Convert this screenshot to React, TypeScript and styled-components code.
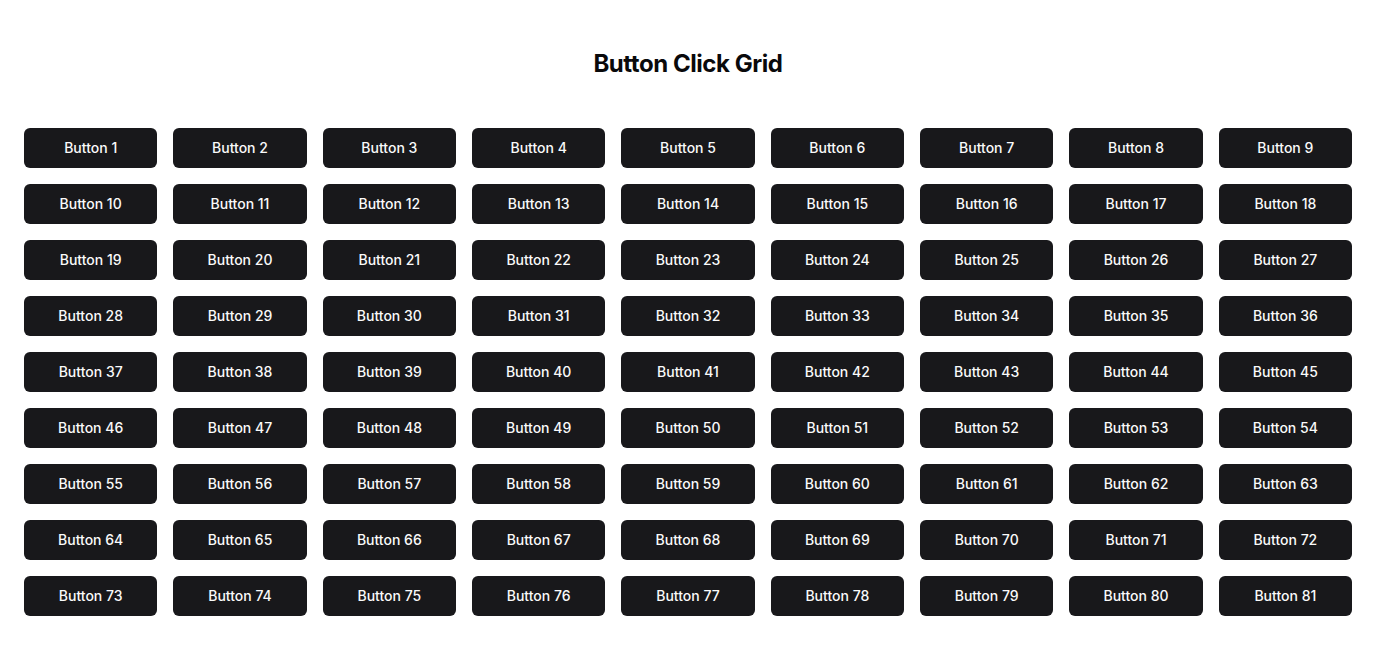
import React from "react";
import styled, { createGlobalStyle } from "styled-components";

const Global = createGlobalStyle`
  html, body { margin: 0; padding: 0; background: #ffffff; }
  body { font-family: Inter, "Noto Sans", sans-serif; -webkit-font-smoothing: antialiased; }
  * { box-sizing: border-box; }
`;

const Page = styled.main`
  padding: 48px 24px 24px;
  display: flex;
  flex-direction: column;
  align-items: stretch;
`;

const Title = styled.h1`
  margin: 0 0 48px;
  font-size: 24px;
  line-height: 32px;
  font-weight: 700;
  text-align: center;
  color: #09090b;
  letter-spacing: -0.45px;
`;

const Grid = styled.div`
  display: grid;
  grid-template-columns: repeat(9, 1fr);
  gap: 16px;
`;

const GridButton = styled.button`
  height: 40px;
  border: none;
  border-radius: 6px;
  background: #18181b;
  color: #fafafa;
  font-family: Inter, "Noto Sans", sans-serif;
  font-size: 14px;
  font-weight: 500;
  line-height: 20px;
  cursor: pointer;
  padding: 0 16px;
  display: flex;
  align-items: center;
  justify-content: center;
`;

export default function App() {
  const items = Array.from({ length: 81 }, (_, i) => i + 1);
  return (
    <>
      <Global />
      <Page>
        <Title>Button Click Grid</Title>
        <Grid>
          {items.map((n) => (
            <GridButton key={n}>Button {n}</GridButton>
          ))}
        </Grid>
      </Page>
    </>
  );
}
